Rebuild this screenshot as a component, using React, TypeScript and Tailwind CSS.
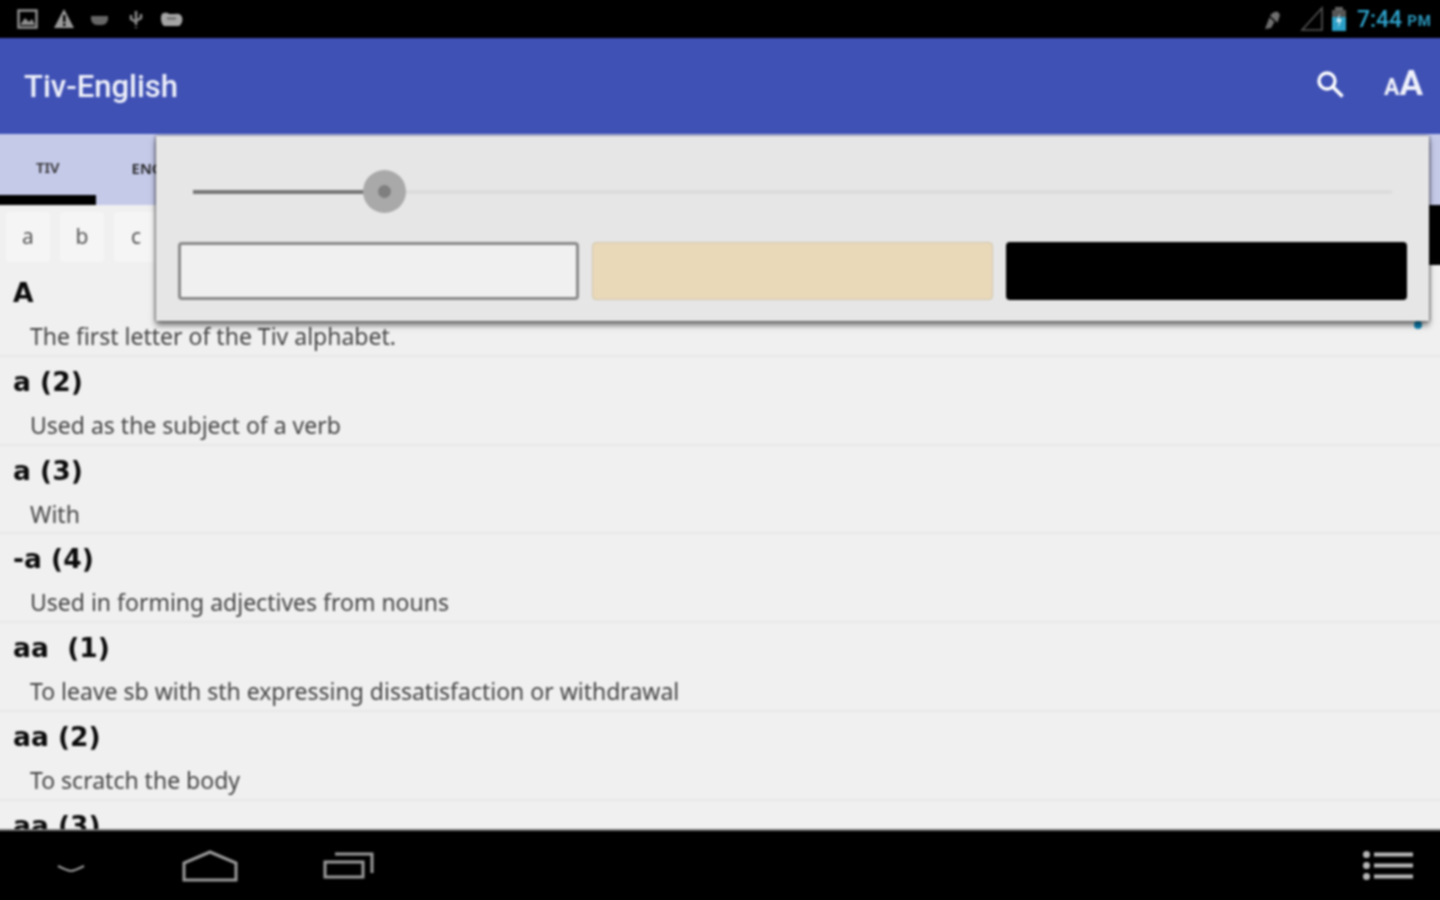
import React from "react";

const rows = [
  ["A", "The first letter of the Tiv alphabet."],
  ["a (2)", "Used as the subject of a verb"],
  ["a (3)", "With"],
  ["-a (4)", "Used in forming adjectives from nouns"],
  ["aa  (1)", "To leave sb with sth expressing dissatisfaction or withdrawal"],
  ["aa (2)", "To scratch the body"],
  ["aa (3)", ""],
];

function StatusLeft() {
  return (
    <div className="flex items-center">
      <svg width="190" height="38" viewBox="0 0 190 38" fill="none">
        <rect x="18.5" y="10.5" width="18" height="17" stroke="#8f8f8f" strokeWidth="2.5" />
        <path d="M20 25l5-7 4 4 3-3 3 6z" fill="#8f8f8f" />
        <path d="M64 9L74 28H54Z" fill="#9a9a9a" />
        <rect x="63" y="15" width="2.5" height="7" fill="#000" />
        <rect x="63" y="23.5" width="2.5" height="2.5" fill="#000" />
        <path d="M91 16h17v3c0 3-3 6-6 6h-5c-3 0-6-3-6-6z" fill="#666" />
        <path d="M136 11v14M136 27v1M131 15v4l5 3M141 14v4l-5 3" stroke="#8a8a8a" strokeWidth="2.5" />
        <path d="M162 14c3-2 6-1 7 0h6c3-1 6 0 7 3 1 3 0 7-3 9h-15c-3-2-4-9-2-12z" fill="#a5a5a5" />
        <rect x="167" y="17" width="9" height="3" fill="#777" />
      </svg>
    </div>
  );
}

function StatusRight() {
  return (
    <div className="flex items-center">
      <svg width="26" height="24" viewBox="0 0 26 24" fill="none">
        <path d="M5 22L10 9c2-4 6-5 8-4l2 3-3 9-2-3-4 7z" fill="#6f6f6f" />
        <path d="M6 6l14 13" stroke="#000" strokeWidth="1.5" />
      </svg>
      <svg width="25" height="26" viewBox="0 0 25 26" fill="none" className="ml-[14px]">
        <path d="M2 24L22 2V24Z" stroke="#555" strokeWidth="1.6" />
      </svg>
      <svg width="16" height="26" viewBox="0 0 16 26" className="ml-[6px]">
        <rect x="4" y="1" width="8" height="3" fill="#666" />
        <rect x="1" y="4" width="14" height="7" fill="#555" />
        <rect x="1" y="11" width="14" height="14" fill="#2b9fc7" />
        <path d="M9 7L5 16h3l-1 6 4-9H8z" fill="#cfeaf3" />
      </svg>
      <span className="ml-[10px] font-['Roboto',sans-serif] text-[23px] leading-none font-medium text-[#2ea3cc]">7:44</span>
      <span className="ml-[5px] mt-[4px] font-['Roboto',sans-serif] text-[15px] leading-none font-bold tracking-[1px] text-[#2a94ba]">PM</span>
    </div>
  );
}

export default function App() {
  return (
    <div className="h-[900px] w-[1440px] overflow-hidden">
      {/* The blurred sheet bleeds 10px past the viewport so its soft edge stays off-screen. */}
      <div className="relative -m-[10px] flex h-[920px] w-[1460px] flex-col overflow-hidden bg-[#f0f0f0] font-['Noto_Sans',sans-serif] blur-[0.8px]">
        <div className="flex h-[48px] shrink-0 items-center justify-between bg-black pl-[10px] pr-[18px] pt-[10px]">
          <StatusLeft />
          <StatusRight />
        </div>

        <header className="flex h-[96px] shrink-0 items-center justify-between bg-[#3f51b5] pl-[34px] pr-[27px]">
          <h1 className="font-['Roboto',sans-serif] text-[31px] leading-none font-medium text-[#eef0fa]">Tiv-English</h1>
          <div className="flex items-center gap-[39px] text-white">
            <svg width="30" height="30" viewBox="0 0 30 30" fill="none" className="mb-[4px]">
              <circle cx="12" cy="12" r="8" stroke="#fff" strokeWidth="3.4" />
              <path d="M18 18l9.5 9.5" stroke="#fff" strokeWidth="3.6" />
            </svg>
            <div className="mb-[6px] flex items-baseline font-['Roboto',sans-serif] font-bold text-[#eef0fa]">
              <span className="text-[23px] leading-none">A</span>
              <span className="text-[35px] leading-none">A</span>
            </div>
          </div>
        </header>

        <nav className="flex h-[71px] shrink-0 bg-[#c5cae9] pl-[10px] text-[15px] font-semibold text-[#333]">
          <div className="-ml-[10px] flex items-center justify-center border-b-[10px] border-black pl-[46px] pr-[36px] pt-[6px]">TIV</div>
          <div className="flex items-center justify-center px-[36px] pb-[2px] text-[#222]">ENGLISH</div>
        </nav>

        <div className="flex h-[63px] shrink-0 items-center gap-[10px] pl-[16px] text-[21px] text-[#555]">
          <div className="flex h-[50px] w-[44px] items-center justify-center rounded-[4px] bg-[#f5f5f5]">a</div>
          <div className="flex h-[50px] w-[44px] items-center justify-center rounded-[4px] bg-[#f5f5f5]">b</div>
          <div className="flex h-[50px] w-[44px] items-center justify-center rounded-[4px] bg-[#f5f5f5]">c</div>
        </div>

        <main className="min-h-0 flex-1 overflow-hidden">
          {rows.map(([term, def], i) => (
            <div key={i} className="flex h-[88.8px] flex-col border-b-2 border-[#e7e7e7] pl-[23px]">
              <div className="mt-[7px] whitespace-pre font-['DejaVu_Sans',sans-serif] text-[26.5px] leading-[36px] font-bold text-[#0a0a0a]">{term}</div>
              <div className="mt-[11px] pl-[17px] text-[23px] leading-[28px] text-[#444]">{def}</div>
            </div>
          ))}
        </main>

        <footer className="flex h-[81px] shrink-0 items-center justify-between border-t-2 border-[#777] bg-black pb-[10px] pl-[65px] pr-[37px]">
          <div className="flex items-center">
            <svg width="32" height="14" viewBox="0 0 32 14" fill="none" className="mt-[6px]">
              <path d="M3 4c6 3 10 5 13 5s7-2 13-5" stroke="#999" strokeWidth="2" />
            </svg>
            <svg width="56" height="32" viewBox="0 0 56 32" fill="none" className="ml-[95px]">
              <path d="M2 30V13L28 2l26 11v17z" stroke="#999" strokeWidth="3" />
            </svg>
            <svg width="52" height="30" viewBox="0 0 52 30" fill="none" className="mb-[2px] ml-[85px]">
              <rect x="2" y="12" width="38" height="15" stroke="#999" strokeWidth="3" />
              <path d="M12 4h37v19" stroke="#999" strokeWidth="3" />
            </svg>
          </div>
          <svg width="50" height="30" viewBox="0 0 50 30" fill="#b8b8b8">
            <circle cx="3.5" cy="3.5" r="3.5" />
            <circle cx="3.5" cy="14.5" r="3.5" />
            <circle cx="3.5" cy="25.5" r="3.5" />
            <rect x="11" y="1.5" width="39" height="4" />
            <rect x="11" y="12.5" width="39" height="4" />
            <rect x="11" y="23.5" width="39" height="4" />
          </svg>
        </footer>

        <div className="absolute left-[1439px] top-[215px] h-[60px] w-[21px] bg-black" />
        <div className="absolute left-[1424px] top-[331px] h-[8px] w-[8px] rounded-full bg-[#0f86b8]" />

        <div className="absolute left-[166px] top-[146px] flex h-[185px] w-[1273px] flex-col bg-[#e6e6e6] px-[22px] shadow-[0_4px_6px_rgba(0,0,0,0.55),-1px_0_2px_rgba(0,0,0,0.35),1px_0_2px_rgba(0,0,0,0.35)]">
          <div className="relative mx-[15px] mt-[54px] h-[4px] bg-[#dcdcdc]">
            <div className="h-[4px] w-[192px] bg-[#777]" />
            <div className="absolute left-[170px] top-[-20px] flex h-[43px] w-[43px] items-center justify-center rounded-full bg-[#a9a9a9]">
              <div className="h-[13px] w-[13px] rounded-full bg-[#7f7f7f]" />
            </div>
          </div>
          <div className="mt-[48px] grid grid-cols-3 gap-[13px]">
            <div className="h-[58px] rounded-[4px] border-[3px] border-[#8a8a8a] bg-[#f0f0f0]" />
            <div className="h-[58px] rounded-[4px] border border-[#cfc6ae] bg-[#ead9b9]" />
            <div className="h-[58px] rounded-[4px] bg-black" />
          </div>
        </div>
      </div>
    </div>
  );
}
